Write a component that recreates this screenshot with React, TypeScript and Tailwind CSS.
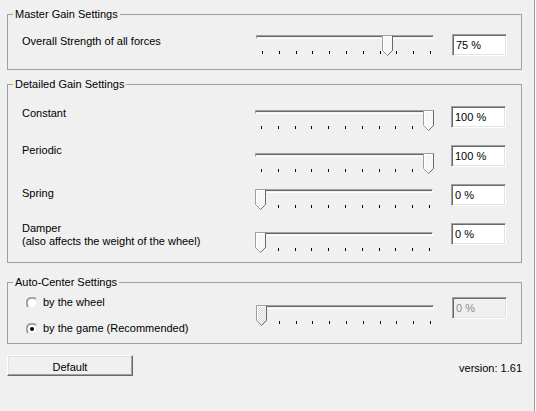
import React from 'react';

const TICKS = Array.from({ length: 11 }, (_, i) => i);

function Thumb({ left, disabled = false }: { left: number; disabled?: boolean }) {
  return (
    <svg width="11" height="22" viewBox="0 0 11 22" className="absolute top-0" style={{ left }}>
      <defs>
        <pattern id="dots" width="2" height="2" patternUnits="userSpaceOnUse">
          <rect width="2" height="2" fill="#ffffff" />
          <rect width="1" height="1" fill="#d4d4d4" />
          <rect x="1" y="1" width="1" height="1" fill="#d4d4d4" />
        </pattern>
      </defs>
      <polygon
        points="0.5,0.5 10.5,0.5 10.5,15.5 5.5,20.5 0.5,15.5"
        fill={disabled ? 'url(#dots)' : '#f7f7f7'}
        stroke="#a0a0a0"
      />
      <polyline points="1.5,15 1.5,1.5 9.5,1.5" fill="none" stroke="#ffffff" />
      <polyline points="10.5,0.5 10.5,15.5 5.5,20.5" fill="none" stroke="#696969" />
    </svg>
  );
}

function Slider({ value, disabled = false }: { value: number; disabled?: boolean }) {
  return (
    <div className="relative w-[178px] h-[28px]">
      <div className="mt-[8px] h-[4px] border border-t-[#a0a0a0] border-l-[#a0a0a0] border-b-white border-r-white">
        <div className="h-px bg-[#696969]" />
      </div>
      <div className="mt-[12px] ml-[6px] w-[169px] flex justify-between">
        {TICKS.map((i) => (
          <div key={i} className="w-px h-[3px] bg-black" />
        ))}
      </div>
      <Thumb left={Math.round(value * 168)} disabled={disabled} />
    </div>
  );
}

function ValueBox({ text, disabled = false }: { text: string; disabled?: boolean }) {
  return (
    <div
      className={
        disabled
          ? 'w-[55px] h-[22px] pl-[3px] pt-[4px] bg-[#f0f0f0] text-[#8c8c8c] border border-t-[#a0a0a0] border-l-[#a0a0a0] border-b-white border-r-white shadow-[inset_1px_1px_0_#696969,inset_-1px_-1px_0_#e3e3e3]'
          : 'w-[55px] h-[22px] pl-[3px] pt-[4px] bg-white border border-t-[#a0a0a0] border-l-[#a0a0a0] border-b-white border-r-white shadow-[inset_1px_1px_0_#696969,inset_-1px_-1px_0_#e3e3e3]'
      }
    >
      {text}
    </div>
  );
}

function Radio({ checked = false }: { checked?: boolean }) {
  return (
    <svg width="12" height="12" viewBox="0 0 12 12" className="shrink-0">
      <circle cx="6" cy="6" r="5.5" fill="#ffffff" />
      <path d="M1.6 10.4 A5.5 5.5 0 0 1 10.4 1.6" fill="none" stroke="#a0a0a0" />
      <path d="M2.4 9.6 A4.5 4.5 0 0 1 9.6 2.4" fill="none" stroke="#696969" />
      <path d="M2.4 9.6 A4.5 4.5 0 0 0 9.6 2.4" fill="none" stroke="#e3e3e3" />
      {checked && <circle cx="6" cy="6" r="2" fill="#000000" />}
    </svg>
  );
}

function GroupBox({ title, className, children }: { title: string; className: string; children: React.ReactNode }) {
  return (
    <fieldset className={`w-[515px] border border-[#a0a0a0] ${className}`}>
      <legend className="ml-[5px] px-[2px]">{title}</legend>
      {children}
    </fieldset>
  );
}

export default function App() {
  return (
    <div className="w-[536px] h-[411px] flex bg-[#f0f0f0] text-black text-[11px] leading-[13px] font-['Liberation_Sans',Arial,sans-serif]">
      <div className="w-[534px] pl-[7px] pt-[8px]">
        <GroupBox title="Master Gain Settings" className="h-[62px]">
          <div className="flex items-start">
            <div className="w-[248px] pl-[14px] mt-[14px]">Overall Strength of all forces</div>
            <div className="mt-[6px]">
              <Slider value={0.75} />
            </div>
            <div className="ml-[18px] mt-[13px]">
              <ValueBox text="75 %" />
            </div>
          </div>
        </GroupBox>

        <GroupBox title="Detailed Gain Settings" className="mt-[8px] h-[185px]">
          <div className="flex items-start h-[43px]">
            <div className="w-[247px] pl-[14px] mt-[16px]">Constant</div>
            <div className="mt-[11px]">
              <Slider value={1} />
            </div>
            <div className="ml-[18px] mt-[15px]">
              <ValueBox text="100 %" />
            </div>
          </div>
          <div className="flex items-start h-[43px]">
            <div className="w-[247px] pl-[14px] mt-[10px]">Periodic</div>
            <div className="mt-[11px]">
              <Slider value={1} />
            </div>
            <div className="ml-[18px] mt-[11px]">
              <ValueBox text="100 %" />
            </div>
          </div>
          <div className="flex items-start h-[41px]">
            <div className="w-[247px] pl-[14px] mt-[10px]">Spring</div>
            <div className="mt-[4px]">
              <Slider value={0} />
            </div>
            <div className="ml-[18px] mt-[7px]">
              <ValueBox text="0 %" />
            </div>
          </div>
          <div className="flex items-start">
            <div className="w-[247px] pl-[14px] mt-[4px]">
              <div>Damper</div>
              <div>(also affects the weight of the wheel)</div>
            </div>
            <div className="mt-[6px]">
              <Slider value={0} />
            </div>
            <div className="ml-[18px] mt-[5px]">
              <ValueBox text="0 %" />
            </div>
          </div>
        </GroupBox>

        <GroupBox title="Auto-Center Settings" className="mt-[13px] h-[68px]">
          <div className="flex items-start">
            <div className="w-[248px] pl-[18px]">
              <div className="flex items-center gap-[5px] mt-[7px]">
                <Radio />
                <span>by the wheel</span>
              </div>
              <div className="flex items-center gap-[5px] mt-[13px]">
                <Radio checked />
                <span>by the game (Recommended)</span>
              </div>
            </div>
            <div className="mt-[8px]">
              <Slider value={0} disabled />
            </div>
            <div className="ml-[18px] mt-[8px]">
              <ValueBox text="0 %" disabled />
            </div>
          </div>
        </GroupBox>

        <div className="w-[515px] mt-[11px] flex justify-between items-start">
          <button className="w-[126px] h-[21px] pt-[3px] text-center border border-t-white border-l-white border-b-[#696969] border-r-[#696969] shadow-[inset_-1px_-1px_0_#a0a0a0,inset_1px_1px_0_#e3e3e3] bg-[#f0f0f0]">
            Default
          </button>
          <div className="mt-[7px]">version: 1.61</div>
        </div>
      </div>
      <div className="w-[2px] border-l border-[#a0a0a0] bg-white" />
    </div>
  );
}
